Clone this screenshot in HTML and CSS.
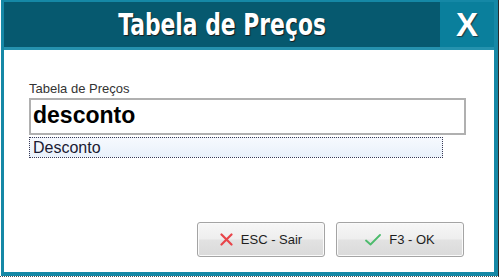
FILE: index.html
```html
<!DOCTYPE html>
<html lang="pt">
<head>
<meta charset="utf-8">
<title>Tabela de Preços</title>
<link rel="stylesheet" href="styles.css">
</head>
<body>
<div class="frame">
  <div class="dialog">
    <div class="titlebar">
      <div class="title"><span class="title-text">Tabela de Preços</span></div>
      <div class="close">X</div>
    </div>
    <div class="content">
      <label class="label">Tabela de Preços</label>
      <div class="input">desconto</div>
      <div class="option">Desconto</div>
      <div class="spacer"></div>
      <div class="buttons">
        <button class="btn">
          <svg class="ico" width="13" height="13" viewBox="0 0 13 13"><path d="M1.5 1.5 L11.5 11.5 M11.5 1.5 L1.5 11.5" stroke="#e8454a" stroke-width="2.2" stroke-linecap="round" fill="none"/></svg>
          <span>ESC - Sair</span>
        </button>
        <button class="btn">
          <svg class="ico" width="16" height="12" viewBox="0 0 16 12"><path d="M1 6.5 L5.5 10.5 L15 1" stroke="#4cbb6c" stroke-width="1.8" stroke-linecap="round" stroke-linejoin="round" fill="none"/></svg>
          <span>F3 - OK</span>
        </button>
      </div>
    </div>
  </div>
</div>
</body>
</html>
```
FILE: styles.css
```css
html, body {
  margin: 0;
  padding: 0;
  background: #ffffff;
}
.frame {
  width: 498px;
  height: 276px;
  border-right: 1px solid #2a2a2a;
  border-bottom: 1px dotted #555;
  display: flex;
}
.dialog {
  flex: 1;
  display: flex;
  flex-direction: column;
  border: 4px solid #1588a6;
  border-top-width: 2px;
  border-left-width: 3px;
  margin-left: 1px;
  background: #ffffff;
}
.titlebar {
  height: 45px;
  display: flex;
  background: #06596f;
  border-bottom: 3px solid #2592ae;
}
.title {
  flex: 1;
  display: flex;
  align-items: center;
  justify-content: center;
}
.title-text {
  display: inline-block;
  font-family: "DejaVu Sans Condensed", "DejaVu Sans", sans-serif;
  font-weight: bold;
  font-size: 30px;
  color: #ffffff;
  text-shadow: 1px 1px 1px #1b1b1b;
  transform: scaleX(0.81);
  white-space: nowrap;
}
.close {
  width: 54px;
  background: #0a7f9c;
  display: flex;
  align-items: center;
  justify-content: center;
  font-family: "Liberation Sans", sans-serif;
  font-weight: bold;
  font-size: 33px;
  color: #ffffff;
  text-shadow: 1px 1px 1px #1b3a44;
}
.content {
  flex: 1;
  display: flex;
  flex-direction: column;
  padding: 31px 28px 15px 25px;
  font-family: "Liberation Sans", Arial, sans-serif;
}
.label {
  font-size: 13px;
  line-height: 15px;
  color: #333333;
  margin-bottom: 2px;
}
.input {
  height: 33px;
  border: 2px solid #b0b0b0;
  padding-left: 2px;
  font-size: 23px;
  font-weight: bold;
  color: #000000;
  line-height: 31px;
}
.option {
  margin-top: 2px;
  width: 409px;
  height: 19px;
  border: 1px dotted #3a3a55;
  background: linear-gradient(#f6f9fe, #e9f1fb);
  padding-left: 3px;
  font-size: 16px;
  line-height: 19px;
  color: #1a1a33;
}
.spacer {
  flex: 1;
}
.buttons {
  display: flex;
  justify-content: flex-end;
  gap: 11px;
  margin-right: 2px;
}
.btn {
  width: 128px;
  height: 35px;
  display: flex;
  align-items: center;
  justify-content: center;
  gap: 8px;
  border: 1px solid #a4a4a4;
  border-radius: 3px;
  background: linear-gradient(#f7f7f7 0%, #eeeeee 48%, #e2e2e2 52%, #dadada 100%);
  box-shadow: inset 0 0 0 1px #fafafa;
  font-family: "Liberation Sans", Arial, sans-serif;
  font-size: 13px;
  color: #1e1e1e;
  padding: 0;
}
.ico {
  display: block;
}
```
